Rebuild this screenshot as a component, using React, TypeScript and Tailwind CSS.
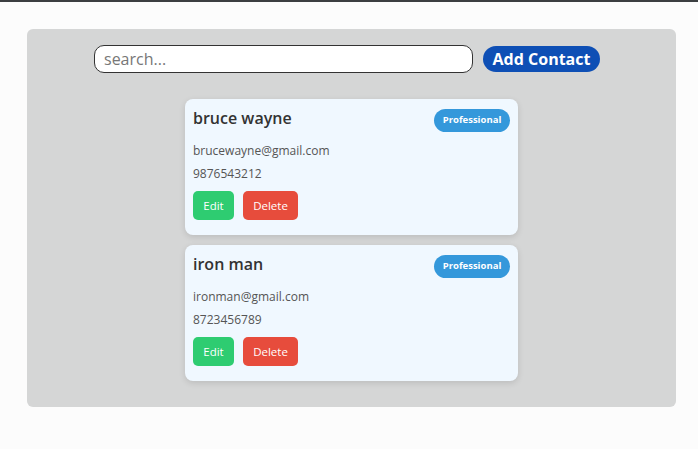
const contacts = [
  { name: 'bruce wayne', email: 'brucewayne@gmail.com', phone: '9876543212', tag: 'Professional' },
  { name: 'iron man', email: 'ironman@gmail.com', phone: '8723456789', tag: 'Professional' },
];

function ContactCard({ c }: { c: (typeof contacts)[number] }) {
  return (
    <div className="w-[333px] h-[136px] bg-[#f0f8ff] rounded-lg shadow-[0_2px_6px_rgba(0,0,0,0.12)] px-2 pt-2">
      <div className="flex items-start justify-between">
        <h3 className="text-[16px] leading-[22px] font-semibold text-[#333]">{c.name}</h3>
        <span className="mt-[2px] h-[23px] w-[76px] flex items-center justify-center rounded-full bg-[#3498db] text-white text-[9.5px] font-bold">
          {c.tag}
        </span>
      </div>
      <p className="mt-[10px] text-[12px] leading-[18px] text-[#555]">{c.email}</p>
      <p className="mt-[5px] text-[12px] leading-[18px] text-[#555]">{c.phone}</p>
      <div className="mt-[8px] flex gap-[9px]">
        <button className="w-[41px] h-[29px] rounded-[5px] bg-[#2ecc71] text-white text-[11.5px]">Edit</button>
        <button className="w-[55px] h-[29px] rounded-[5px] bg-[#e74c3c] text-white text-[11.5px]">Delete</button>
      </div>
    </div>
  );
}

export default function App() {
  return (
    <div className="min-h-screen bg-[#fcfcfc] border-t-2 border-[#3c3f41] font-['Open_Sans',sans-serif]">
      <div className="ml-[27px] mt-[27px] w-[649px] bg-[#d5d6d6] rounded-md pt-4 pb-[26px] flex flex-col items-center">
        <div className="flex items-center gap-[10px] ml-[-9px]">
          <input
            placeholder="search..."
            className="w-[379px] h-[28px] rounded-[10px] border border-[#333] bg-white px-[9px] text-[16px] placeholder:text-[#777] outline-none"
          />
          <button className="w-[117px] h-[26px] rounded-full bg-[#0e4fb5] text-white text-[16px] font-bold leading-none">
            Add Contact
          </button>
        </div>
        <div className="mt-[26px] flex flex-col gap-[10px]">
          {contacts.map((c) => (
            <ContactCard key={c.name} c={c} />
          ))}
        </div>
      </div>
    </div>
  );
}
